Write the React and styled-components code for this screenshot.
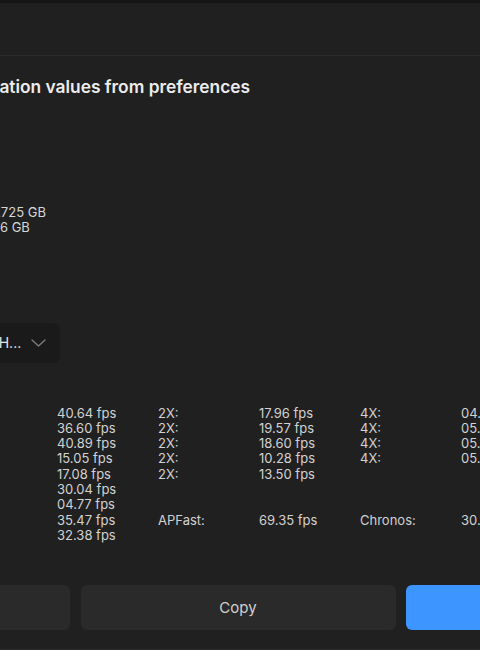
import React from 'react';
import styled, { createGlobalStyle } from 'styled-components';

const Global = createGlobalStyle`
  html, body { margin: 0; padding: 0; background: #202020; }
  body { font-family: Inter, "Noto Sans", sans-serif; overflow: hidden; }
`;

const Page = styled.div`
  width: 480px;
  height: 650px;
  overflow: hidden;
  background: #202020;
`;

const Dialog = styled.div`
  width: 996px;
  height: 650px;
  margin-left: -260px;
  display: flex;
  flex-direction: column;
  background: #202020;
  color: #d4d4d4;
  border-bottom: 1px solid #2a2a2a;
  box-sizing: border-box;
`;

const TopStrip = styled.div`
  height: 3px;
  background: #171513;
`;

const Header = styled.div`
  height: 52px;
  border-bottom: 1px solid #2b2b2b;
`;

const Body = styled.div`
  flex: 1;
  display: flex;
  flex-direction: column;
  padding: 19px 216px 0;
`;

const Heading = styled.h2`
  margin: 0;
  font-size: 17.35px;
  font-weight: 600;
  line-height: 24px;
  color: #ececec;
  white-space: nowrap;
`;

const Info = styled.div`
  margin-top: 106px;
  display: grid;
  grid-template-columns: 36px auto;
  justify-content: start;
  font-size: 13px;
  line-height: 15.3px;
  color: #d6d6d6;
  white-space: nowrap;
`;

const Select = styled.button`
  margin-top: 87px;
  width: 104px;
  height: 40px;
  display: flex;
  align-items: center;
  gap: 10px;
  padding: 0 14px 0 8px;
  box-sizing: border-box;
  background: #1a1a1a;
  border: none;
  border-radius: 7px;
  color: #e6e6e6;
  font-family: inherit;
  font-size: 14px;
  white-space: nowrap;
`;

const SelectText = styled.span`
  flex: 1;
  overflow: hidden;
  text-align: left;
`;

const Table = styled.div`
  margin-top: 43px;
  display: grid;
  grid-template-columns: repeat(6, 101px);
  font-size: 13px;
  line-height: 15.3px;
  color: #d2d2d2;
  white-space: nowrap;
`;

const Footer = styled.div`
  display: flex;
  gap: 10.5px;
  padding: 0 15px 19px;
`;

const Button = styled.button`
  flex: 1;
  height: 45px;
  border: none;
  border-radius: 6px;
  background: ${p => (p.$primary ? '#3d95ff' : '#2a2a2a')};
  color: ${p => (p.$primary ? '#ffffff' : '#cfcfcf')};
  font-family: inherit;
  font-size: 15px;
`;

const Chevron = () => (
  <svg width="15" height="8" viewBox="0 0 15 8" fill="none">
    <path d="M1 1l6.5 6L14 1" stroke="#7c7c7c" strokeWidth="1.4" strokeLinecap="round" strokeLinejoin="round" />
  </svg>
);

const rows = [
  ['1X:', '40.64 fps', '2X:', '17.96 fps', '4X:', '04.92 fps'],
  ['1X:', '36.60 fps', '2X:', '19.57 fps', '4X:', '05.31 fps'],
  ['1X:', '40.89 fps', '2X:', '18.60 fps', '4X:', '05.12 fps'],
  ['1X:', '15.05 fps', '2X:', '10.28 fps', '4X:', '05.04 fps'],
  ['1X:', '17.08 fps', '2X:', '13.50 fps', '', ''],
  ['Nyx:', '30.04 fps', '', '', '', ''],
  ['Rhea:', '04.77 fps', '', '', '', ''],
  ['Apollo:', '35.47 fps', 'APFast:', '69.35 fps', 'Chronos:', '30.18 fps'],
  ['CHF:', '32.38 fps', '', '', '', ''],
];

export default function App() {
  return (
    <Page>
      <Global />
      <Dialog>
        <TopStrip />
        <Header />
        <Body>
          <Heading>Animation values from preferences</Heading>
          <Info>
            <span>Used</span>
            <span>1.725 GB</span>
            <span>Total</span>
            <span>26 GB</span>
          </Info>
          <Select>
            <SelectText>Auto H...</SelectText>
            <Chevron />
          </Select>
          <Table>
            {rows.map((r, i) => r.map((c, j) => <span key={i + '-' + j}>{c}</span>))}
          </Table>
        </Body>
        <Footer>
          <Button>Cancel</Button>
          <Button>Copy</Button>
          <Button $primary>Save</Button>
        </Footer>
      </Dialog>
    </Page>
  );
}
